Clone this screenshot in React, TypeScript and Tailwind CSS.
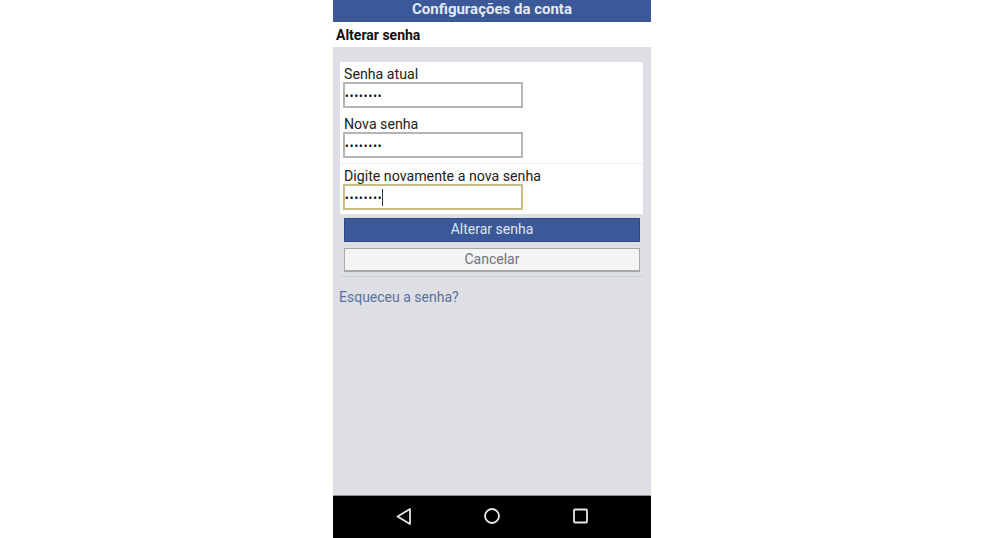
function PasswordField({ label, value, focused, className }: { label: string; value: string; focused?: boolean; className?: string }) {
  return (
    <div className={className}>
      <div className="pl-[1px] pt-[1px] text-[14.2px] leading-[16px] text-[#222222]">{label}</div>
      <div
        className={`flex h-[26px] w-[180px] items-center border-2 bg-white pt-[3px] ${
          focused ? 'border-[#c9bd85]' : 'border-[#b5b5b5]'
        }`}
      >
        <span className="text-[10px] font-bold leading-none tracking-[1.1px] text-[#111111]">{value}</span>
        {focused && <span className="ml-[-1px] mt-[-3px] h-[17px] w-[1px] bg-[#333333]"></span>}
      </div>
    </div>
  )
}

export default function App() {
  return (
    <div className="flex h-[538px] w-[984px] justify-center bg-white font-['Roboto',sans-serif]">
      <div className="flex h-full w-[318px] flex-col bg-[#dedfe5]">
        <div className="flex h-[22px] items-center justify-center bg-[#3b5998] pb-[4px] text-[15px] font-bold text-[#e4e9f4]">
          Configurações da conta
        </div>
        <div className="flex h-[25px] items-center bg-white pl-[3px] pt-[1px] text-[14px] font-bold text-[#111111]">
          Alterar senha
        </div>
        <div className="flex flex-1 flex-col px-[7px] pt-[15px]">
          <div className="border-b border-[#cfd1d8] pb-[4px] pr-[1px]">
            <div className="flex flex-col bg-white pb-[4px] pl-[3px] pt-[3px]">
              <PasswordField label="Senha atual" value="••••••••" className="mb-[7px]" />
              <PasswordField label="Nova senha" value="••••••••" className="mb-[5px]" />
              <PasswordField label="Digite novamente a nova senha" value="••••••••" focused className="-ml-[3px] border-t border-[#eceef2] pl-[3px] pt-[3px]" />
            </div>
            <button
              type="button"
              className="ml-[4px] mt-[4px] flex h-[24px] w-[296px] items-center justify-center border border-[#2c4a86] bg-[#3b5998] pb-[1px] text-[14px] text-[#dfe5f2]"
            >
              Alterar senha
            </button>
            <button
              type="button"
              className="ml-[4px] mt-[6px] flex h-[24px] w-[296px] items-center justify-center border border-b-2 border-[#a8a8a8] bg-[#f3f4f4] text-[14px] text-[#6d7380]"
            >
              Cancelar
            </button>
          </div>
          <a className="ml-[-1px] mt-[12px] block text-[14px] leading-[17px] text-[#5a6f9c]">Esqueceu a senha?</a>
        </div>
        <div className="flex h-[43px] items-center justify-center gap-[64px] border-t border-[#8d8d8d] bg-black pb-[2px]">
          <svg width="24" height="24" viewBox="0 0 24 24" fill="none" stroke="#e6e6e6" strokeWidth="1.8">
            <path d="M18 5v15L5.5 12.5z" strokeLinejoin="round" />
          </svg>
          <svg width="24" height="24" viewBox="0 0 24 24" fill="none" stroke="#e6e6e6" strokeWidth="1.8">
            <circle cx="12" cy="12" r="7" />
          </svg>
          <svg width="24" height="24" viewBox="0 0 24 24" fill="none" stroke="#e6e6e6" strokeWidth="1.8">
            <rect x="6" y="5.5" width="13" height="13" rx="1" />
          </svg>
        </div>
      </div>
    </div>
  )
}
